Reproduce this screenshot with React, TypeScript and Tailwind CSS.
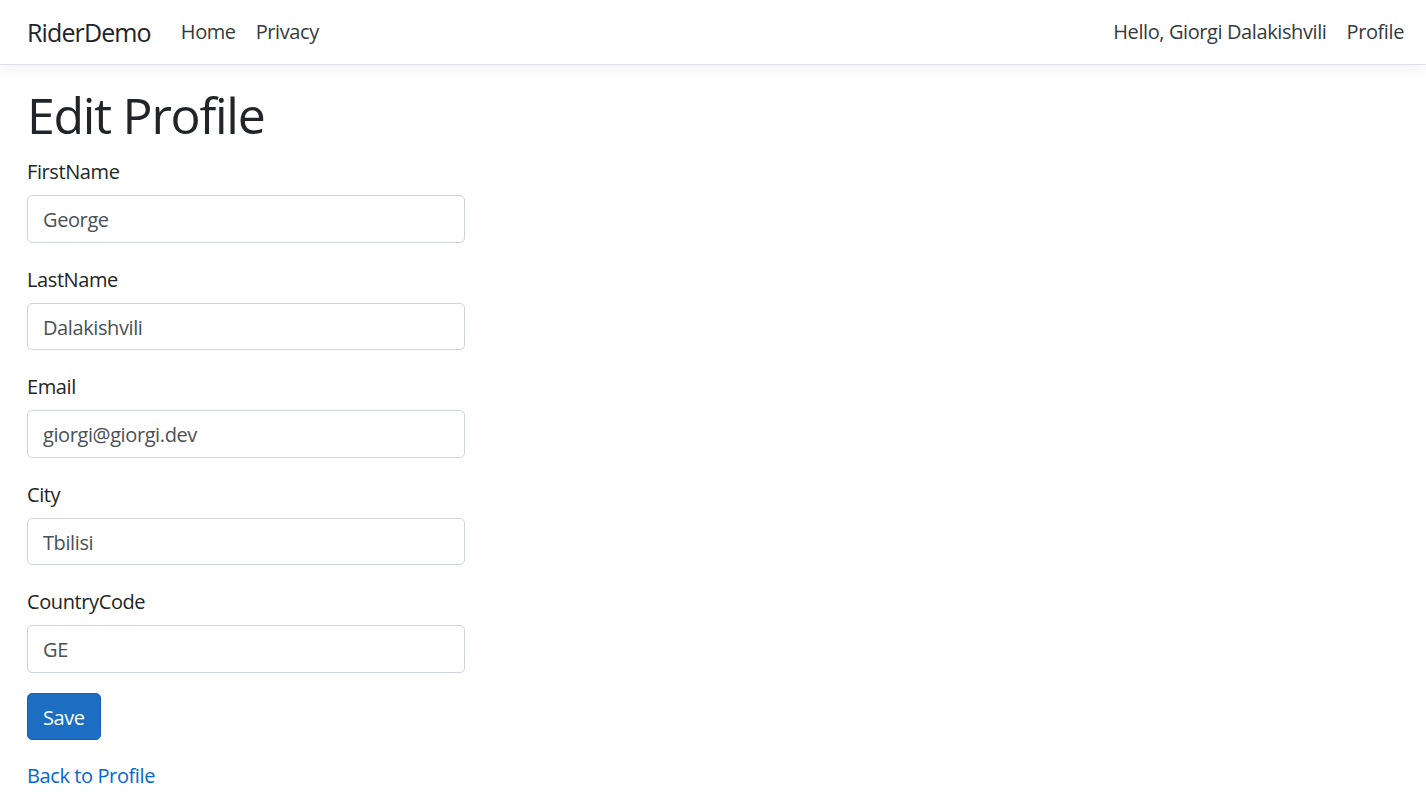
export default function App() {
  const fields = [
    { label: "FirstName", value: "George" },
    { label: "LastName", value: "Dalakishvili" },
    { label: "Email", value: "giorgi@giorgi.dev" },
    { label: "City", value: "Tbilisi" },
    { label: "CountryCode", value: "GE" },
  ];

  return (
    <div className="min-h-screen bg-white text-[#212529] font-['Segoe_UI','Open_Sans',sans-serif] text-[20px] tracking-[-0.02em]">
      {/* Navbar */}
      <header className="h-[65px] border-b border-[#dee2e6] shadow-[0_5px_15px_rgba(0,0,0,0.05)] bg-white">
        <nav className="h-16 flex items-center pl-[27px] pr-[12px]">
          <a href="#" className="text-[25px] text-[#212529] mr-[20px] leading-none tracking-[-0.035em]">
            RiderDemo
          </a>
          <ul className="flex flex-1 items-center">
            <li><a href="#" className="px-[10px] text-[#343a40]">Home</a></li>
            <li><a href="#" className="px-[10px] text-[#343a40]">Privacy</a></li>
          </ul>
          <ul className="flex items-center">
            <li><a href="#" className="px-[10px] text-[#343a40]">Hello, Giorgi Dalakishvili</a></li>
            <li><a href="#" className="px-[10px] text-[#343a40]">Profile</a></li>
          </ul>
        </nav>
      </header>

      {/* Main */}
      <main className="pl-[27px] pt-[20px]">
        <h1 className="text-[50px] leading-[60px] mb-[10px] tracking-[-0.025em]">Edit Profile</h1>
        <form className="w-[438px]">
          {fields.map((f) => (
            <div key={f.label} className="mb-[20px]">
              <label className="block leading-[30px] pt-[2px] mb-[8px]">{f.label}</label>
              <input
                defaultValue={f.value}
                className="block w-full h-[47.5px] px-[15px] pt-[2px] border border-[#ced4da] rounded-[5px] text-[#495057] text-[20px] tracking-[-0.02em] outline-none"
              />
            </div>
          ))}
          <button
            type="button"
            className="h-[47.5px] px-[15px] pt-[3px] bg-[#1b6ec2] border border-[#1861ac] rounded-[5px] text-white tracking-[-0.02em]"
          >
            Save
          </button>
        </form>
        <div className="mt-[21px]">
          <a href="#" className="text-[#0366d6] leading-[30px]">Back to Profile</a>
        </div>
      </main>
    </div>
  );
}
